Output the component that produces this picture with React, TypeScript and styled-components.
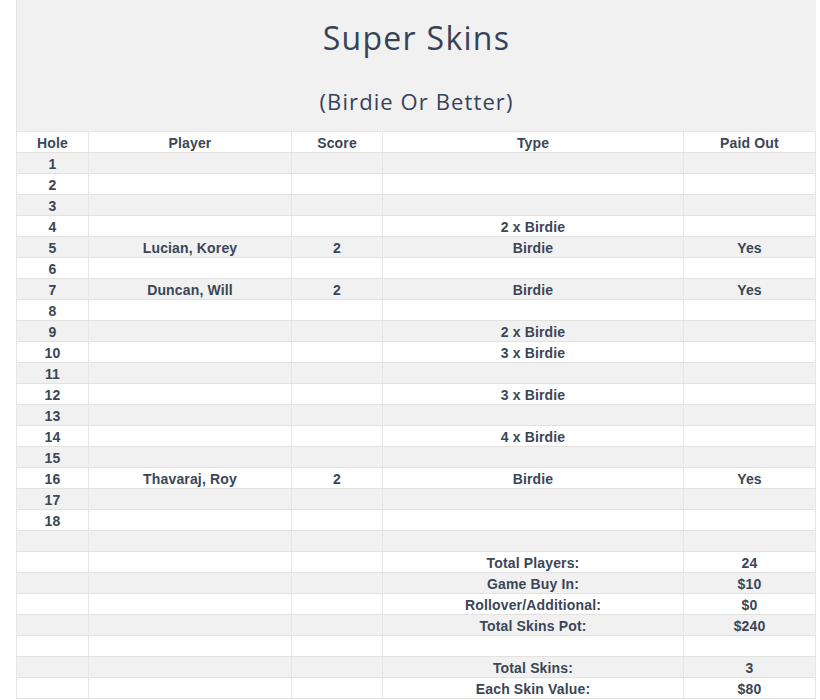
import React from 'react';
import styled, { createGlobalStyle } from 'styled-components';

const GlobalStyle = createGlobalStyle`
  html, body {
    margin: 0;
    padding: 0;
    background: #ffffff;
  }
`;

const COLUMNS = '72px 203px 91px 301px 133px';

const Page = styled.div`
  width: 800px;
  margin-left: 16px;
`;

const TitleBox = styled.header`
  height: 132px;
  box-sizing: border-box;
  background: #f1f1f1;
  border-left: 1px solid #e4e4e4;
  border-bottom: 1px solid #e4e4e4;
  display: flex;
  flex-direction: column;
  align-items: center;
  padding-top: 22px;
  font-family: 'Open Sans', 'Noto Sans', sans-serif;
  color: #34435a;
`;

const Title = styled.h1`
  margin: 0;
  font-size: 32px;
  line-height: 32px;
  font-weight: 400;
  letter-spacing: 1.3px;
`;

const Subtitle = styled.h2`
  margin: 36px 0 0;
  font-size: 22px;
  line-height: 22px;
  font-weight: 400;
  letter-spacing: 1.1px;
`;

const Table = styled.div`
  font-family: 'Liberation Sans', Arial, sans-serif;
  font-weight: 700;
  font-size: 14px;
  color: #3b4657;
`;

const Row = styled.div<{ $shaded?: boolean }>`
  display: grid;
  grid-template-columns: ${COLUMNS};
  height: 21px;
  box-sizing: border-box;
  border-bottom: 1px solid #e2e2e2;
  background: ${(p) => (p.$shaded ? '#f1f1f1' : '#ffffff')};
`;

const Cell = styled.div`
  border-left: 1px solid #e6e6e6;
  text-align: center;
  line-height: 20px;
  padding-top: 1px;
  box-sizing: border-box;
  white-space: nowrap;
  overflow: hidden;
  letter-spacing: 0.15px;

  &:last-child {
    border-right: 1px solid #e6e6e6;
  }
`;

type Line = [string, string, string, string, string];

const holes: Line[] = [
  ['1', '', '', '', ''],
  ['2', '', '', '', ''],
  ['3', '', '', '', ''],
  ['4', '', '', '2 x Birdie', ''],
  ['5', 'Lucian, Korey', '2', 'Birdie', 'Yes'],
  ['6', '', '', '', ''],
  ['7', 'Duncan, Will', '2', 'Birdie', 'Yes'],
  ['8', '', '', '', ''],
  ['9', '', '', '2 x Birdie', ''],
  ['10', '', '', '3 x Birdie', ''],
  ['11', '', '', '', ''],
  ['12', '', '', '3 x Birdie', ''],
  ['13', '', '', '', ''],
  ['14', '', '', '4 x Birdie', ''],
  ['15', '', '', '', ''],
  ['16', 'Thavaraj, Roy', '2', 'Birdie', 'Yes'],
  ['17', '', '', '', ''],
  ['18', '', '', '', ''],
  ['', '', '', '', ''],
  ['', '', '', 'Total Players:', '24'],
  ['', '', '', 'Game Buy In:', '$10'],
  ['', '', '', 'Rollover/Additional:', '$0'],
  ['', '', '', 'Total Skins Pot:', '$240'],
  ['', '', '', '', ''],
  ['', '', '', 'Total Skins:', '3'],
  ['', '', '', 'Each Skin Value:', '$80'],
];

export default function App() {
  return (
    <Page>
      <GlobalStyle />
      <TitleBox>
        <Title>Super Skins</Title>
        <Subtitle>(Birdie Or Better)</Subtitle>
      </TitleBox>
      <Table>
        <Row>
          <Cell>Hole</Cell>
          <Cell>Player</Cell>
          <Cell>Score</Cell>
          <Cell>Type</Cell>
          <Cell>Paid Out</Cell>
        </Row>
        {holes.map((line, i) => (
          <Row key={i} $shaded={i % 2 === 0}>
            {line.map((value, j) => (
              <Cell key={j}>{value}</Cell>
            ))}
          </Row>
        ))}
      </Table>
    </Page>
  );
}
